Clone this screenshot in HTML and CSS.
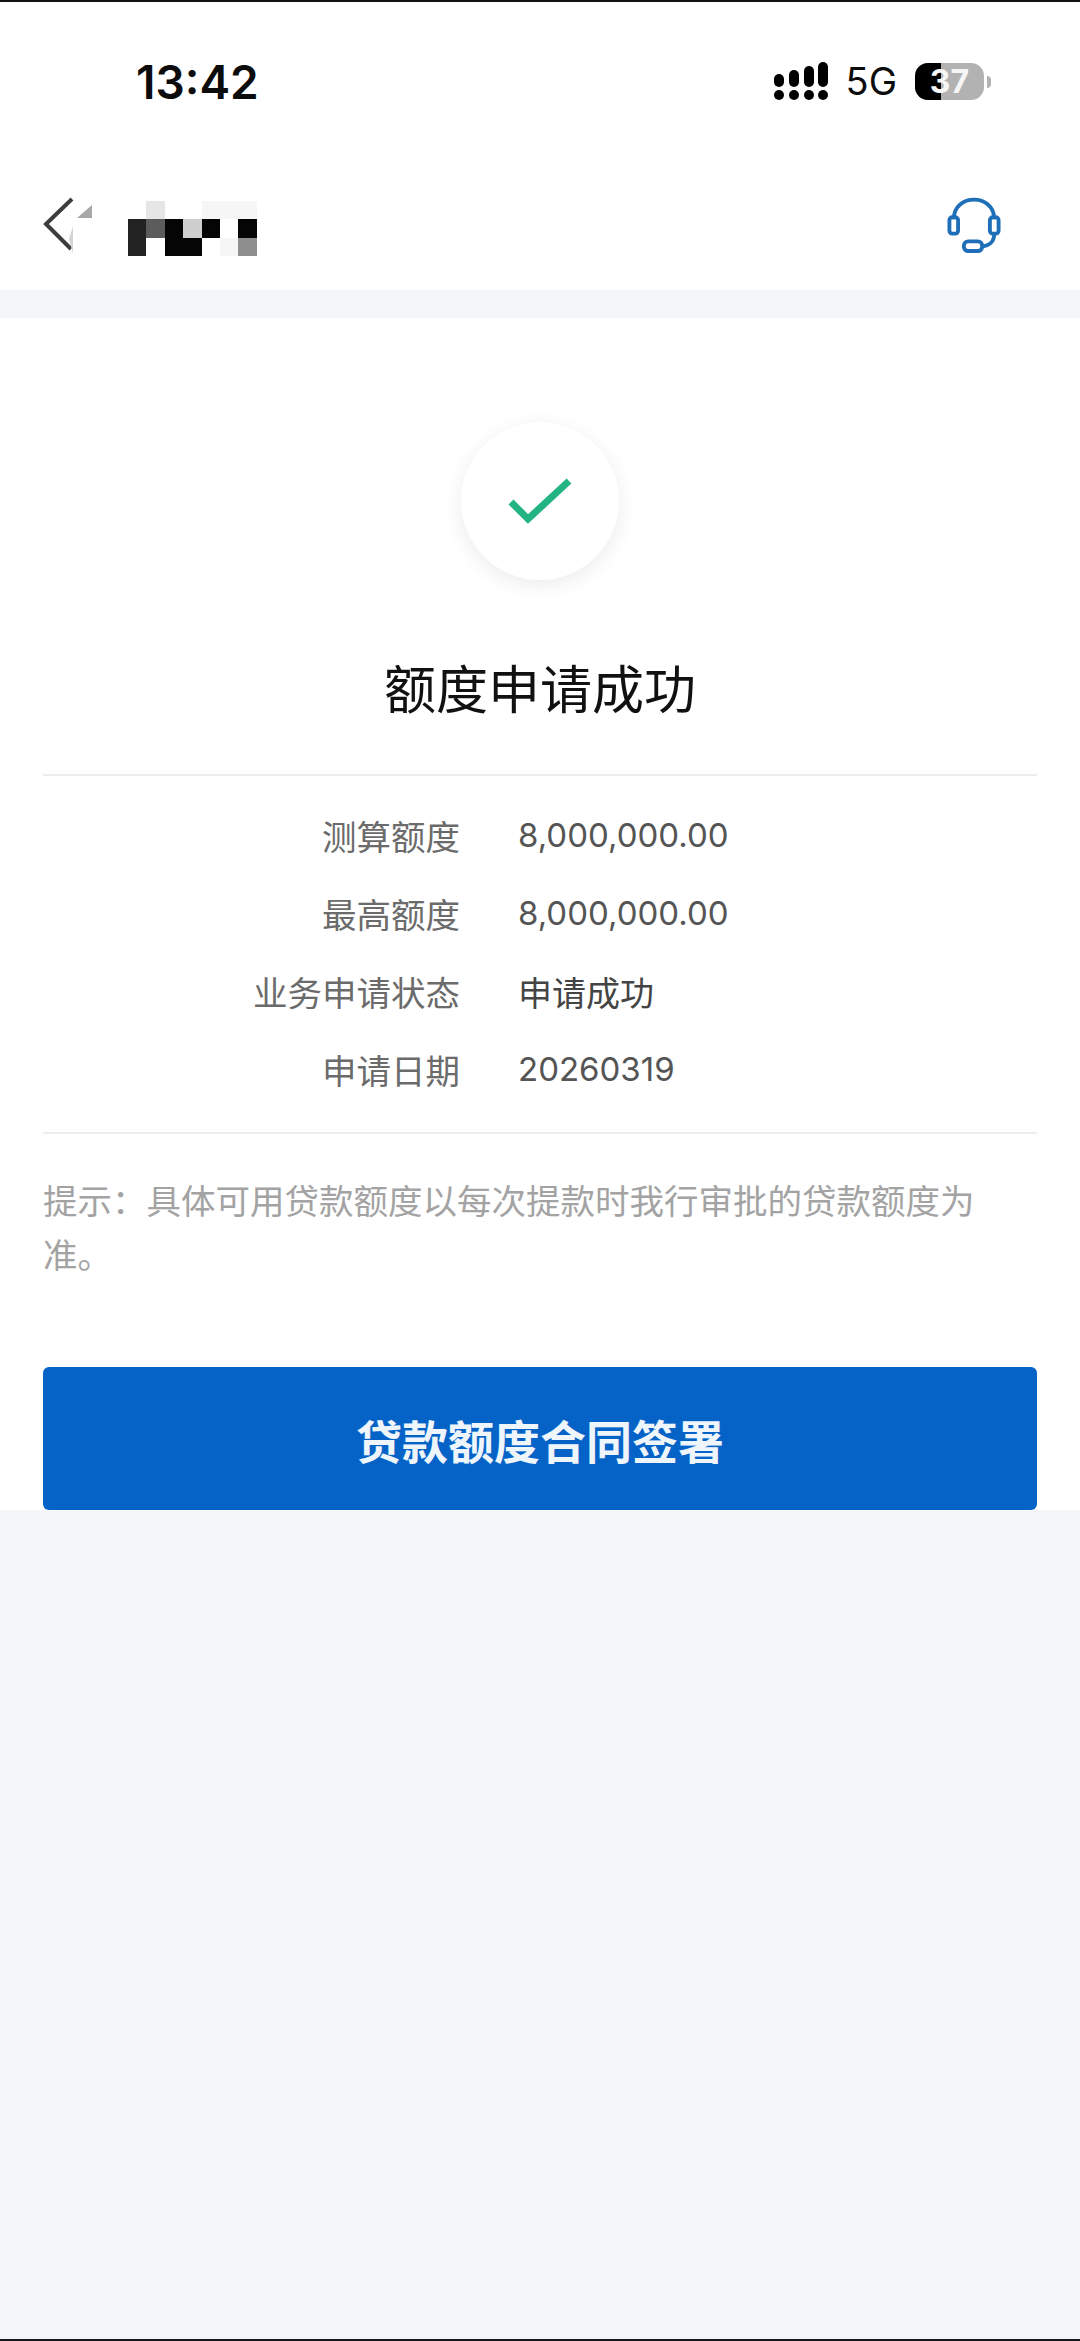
FILE: index.html
```html
<!DOCTYPE html>
<html lang="zh-CN">
<head>
<meta charset="utf-8">
<title>额度申请成功</title>
<link rel="stylesheet" href="styles.css">
</head>
<body>
<div class="screen">
  <header class="top">
    <div class="status">
      <span class="time">13:42</span>
      <div class="status-right">
        <svg class="signal" width="54" height="38" viewBox="0 0 54 38" fill="#000">
          <rect x="0" y="12" width="10" height="13" rx="5"/><rect x="15" y="8" width="10" height="17" rx="5"/><rect x="30" y="4" width="10" height="21" rx="5"/><rect x="44" y="0" width="10" height="25" rx="5"/>
          <circle cx="5" cy="33" r="5"/><circle cx="20" cy="33" r="5"/><circle cx="35" cy="33" r="5"/><circle cx="49" cy="33" r="5"/>
        </svg>
        <span class="net">5G</span>
        <div class="battery">
          <div class="battery-fill"></div>
          <span class="battery-num">37</span>
          <span class="battery-cap"></span>
        </div>
      </div>
    </div>
    <nav class="nav">
      <svg class="back" width="52" height="62" viewBox="0 0 52 62" fill="none">
        <path d="M29 2 L3 27 L28 52" stroke="#3d3d3d" stroke-width="4"/>
        <path d="M34 21 L49 8 L49 21 Z" fill="#a8a8a8"/>
        <path d="M30 29 L30 57 L26 42 Z" fill="#d4d4d4"/>
      </svg>
      <div class="mosaic">
        <i></i><i class="m1"></i><i></i><i></i><i class="m0"></i><i class="m0"></i><i class="m0"></i>
        <i class="m2"></i><i class="m3"></i><i class="m4"></i><i class="m5"></i><i class="m4"></i><i></i><i class="m4"></i>
        <i class="m2"></i><i></i><i class="m4"></i><i class="m4"></i><i></i><i class="m0"></i><i class="m6"></i>
      </div>
      <svg class="service" width="54" height="58" viewBox="0 0 56 60" fill="none" stroke="#1f6fb8" stroke-width="4">
        <path d="M7 24 C7 -3 49 -3 49 24"/>
        <rect x="2.500" y="22" width="9" height="17" rx="3"/>
        <rect x="44.500" y="22" width="9" height="17" rx="3"/>
        <path d="M49 39 C49 47 44 52 35 52"/>
        <rect x="17.500" y="47" width="19" height="10" rx="4.500"/>
      </svg>
    </nav>
  </header>

  <main class="card">
    <div class="tick">
      <svg width="64" height="48" viewBox="0 0 64 48" fill="none">
        <path d="M3 25 L20 42 L61 4" stroke="#22b583" stroke-width="7"/>
      </svg>
    </div>
    <h1 class="title">额度申请成功</h1>
    <dl class="info">
      <div class="row"><dt>测算额度</dt><dd>8,000,000.00</dd></div>
      <div class="row"><dt>最高额度</dt><dd>8,000,000.00</dd></div>
      <div class="row"><dt>业务申请状态</dt><dd class="strong">申请成功</dd></div>
      <div class="row"><dt>申请日期</dt><dd>20260319</dd></div>
    </dl>
    <p class="hint">提示：具体可用贷款额度以每次提款时我行审批的贷款额度为准。</p>
    <button class="primary" type="button">贷款额度合同签署</button>
  </main>
</div>
</body>
</html>
```

FILE: styles.css
```css
* { box-sizing: border-box; }
html, body { margin: 0; padding: 0; }
body {
  width: 1080px;
  height: 2341px;
  overflow: hidden;
  background: #f4f6fa;
  font-family: "Inter", "Noto Sans CJK SC", sans-serif;
}
.screen {
  height: 2341px;
  border-top: 2px solid #111;
  border-bottom: 2px solid #15171c;
  display: flex;
  flex-direction: column;
}
.top { background: #fff; height: 288px; }
.status {
  height: 148px;
  padding: 52px 0 0 136px;
  display: flex;
  justify-content: space-between;
  align-items: flex-start;
}
.time {
  font-size: 46px;
  line-height: 56px;
  font-weight: 600;
  color: #0c0c0c;
}
.status-right {
  display: flex;
  align-items: center;
  gap: 18px;
  padding: 8px 0 0;
  margin-right: 96px;
}
.signal { display: block; }
.net {
  font-size: 38px;
  line-height: 38px;
  color: #0c0c0c;
}
.battery {
  position: relative;
  width: 69px;
  height: 37px;
  border-radius: 13px;
  background: #b2b2b2;
}
.battery-fill {
  position: absolute;
  left: 0;
  top: 0;
  width: 26px;
  height: 100%;
  background: #000;
  border-radius: 13px 0 0 13px;
}
.battery-num {
  position: absolute;
  left: 0;
  right: 0;
  top: 0;
  text-align: center;
  color: #f6f6f6;
  font-size: 32px;
  line-height: 37px;
  font-weight: 700;
}
.battery-cap {
  position: absolute;
  right: -7px;
  top: 13px;
  width: 4px;
  height: 12px;
  background: #b2b2b2;
  border-radius: 0 4px 4px 0;
}
.nav {
  height: 140px;
  padding: 46px 79px 0 43px;
  display: flex;
  align-items: flex-start;
}
.back { flex: none; display: block; margin-top: 1px; }
.mosaic {
  margin: 5px 0 0 33px;
  display: grid;
  grid-template-columns: repeat(7, 18.4px);
  grid-template-rows: repeat(3, 18.400px);
}
.mosaic .m0 { background: #f6f6f6; }
.mosaic .m1 { background: #e6e6e6; }
.mosaic .m2 { background: #222; }
.mosaic .m3 { background: #5c5c5c; }
.mosaic .m4 { background: #050505; }
.mosaic .m5 { background: #cfcfcf; }
.mosaic .m6 { background: #8e8e8e; }
.service { margin-left: auto; display: block; }

.card {
  margin-top: 28px;
  background: #fff;
  height: 1192px;
  padding: 104px 43px 0;
  display: flex;
  flex-direction: column;
}
.tick {
  width: 158px;
  height: 158px;
  border-radius: 50%;
  align-self: center;
  background: #fff;
  box-shadow: 0 5px 20px rgba(0, 0, 0, 0.08);
  display: flex;
  align-items: center;
  justify-content: center;
}
.title {
  margin: 75px 0 0;
  text-align: center;
  font-size: 52px;
  line-height: 72px;
  font-weight: 400;
  color: #111;
}
.info {
  margin: 47px 0 0;
  padding: 20px 0 24px;
  border-top: 2px solid #ededed;
  border-bottom: 2px solid #ededed;
}
.row {
  display: flex;
  height: 78px;
  align-items: center;
  font-size: 34.500px;
}
.row dt {
  width: 417px;
  text-align: right;
  color: #6b6b6b;
}
.row dd {
  margin: 0 0 0 58px;
  color: #555;
  font-size: 33px;
}
.row dd.strong { color: #444; font-size: 34px; }
.hint {
  margin: 41px 0 0;
  font-size: 34.500px;
  line-height: 54px;
  color: #a3a3a3;
}
.primary {
  margin-top: 84px;
  height: 143px;
  border: 0;
  border-radius: 6px;
  background: #0563c8;
  color: #eef5fb;
  font-family: inherit;
  font-size: 46px;
  font-weight: 700;
}
```
